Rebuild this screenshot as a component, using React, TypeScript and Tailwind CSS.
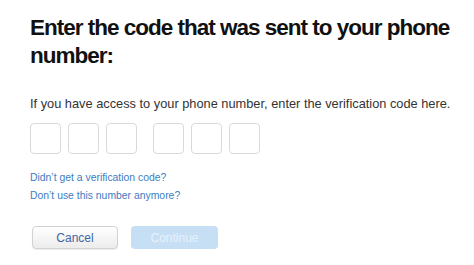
import React from "react";

export default function App() {
  const box = "w-[31px] h-[31px] rounded-[4px] border border-[#d9d9d9] bg-white";
  return (
    <div className="w-[474px] h-[265px] overflow-hidden bg-white pl-[30px] pt-[14px] font-['Liberation_Sans',Arial,sans-serif] text-[#111]">
      <h1 className="text-[22.5px] leading-[28px] font-bold tracking-[-1px] text-[#111] whitespace-nowrap">
        Enter the code that was sent to your phone
        <br />
        number:
      </h1>
      <p className="mt-[26px] text-[12.8px] leading-[16px] text-[#333]">
        If you have access to your phone number, enter the verification code here.
      </p>
      <div className="mt-[11px] flex">
        <div className="flex gap-[7px]">
          <div className={box} />
          <div className={box} />
          <div className={box} />
        </div>
        <div className="ml-[16px] flex gap-[7px]">
          <div className={box} />
          <div className={box} />
          <div className={box} />
        </div>
      </div>
      <div className="mt-[15px] flex flex-col text-[10.4px] leading-[18px] text-[#3d7cc2]">
        <span>Didn’t get a verification code?</span>
        <span>Don’t use this number anymore?</span>
      </div>
      <div className="mt-[21px] flex gap-[13px] ml-[2px]">
        <button className="w-[86px] h-[23px] rounded-[4px] border border-[#d2d2d2] bg-gradient-to-b from-[#ffffff] to-[#ececec] text-[12px] text-[#3b67a6] shadow-[0_1px_1px_rgba(0,0,0,0.08)]">
          Cancel
        </button>
        <button className="w-[87px] h-[23px] rounded-[4px] bg-[#c6dff4] text-[12px] text-[#e6f1fb]">
          Continue
        </button>
      </div>
    </div>
  );
}
